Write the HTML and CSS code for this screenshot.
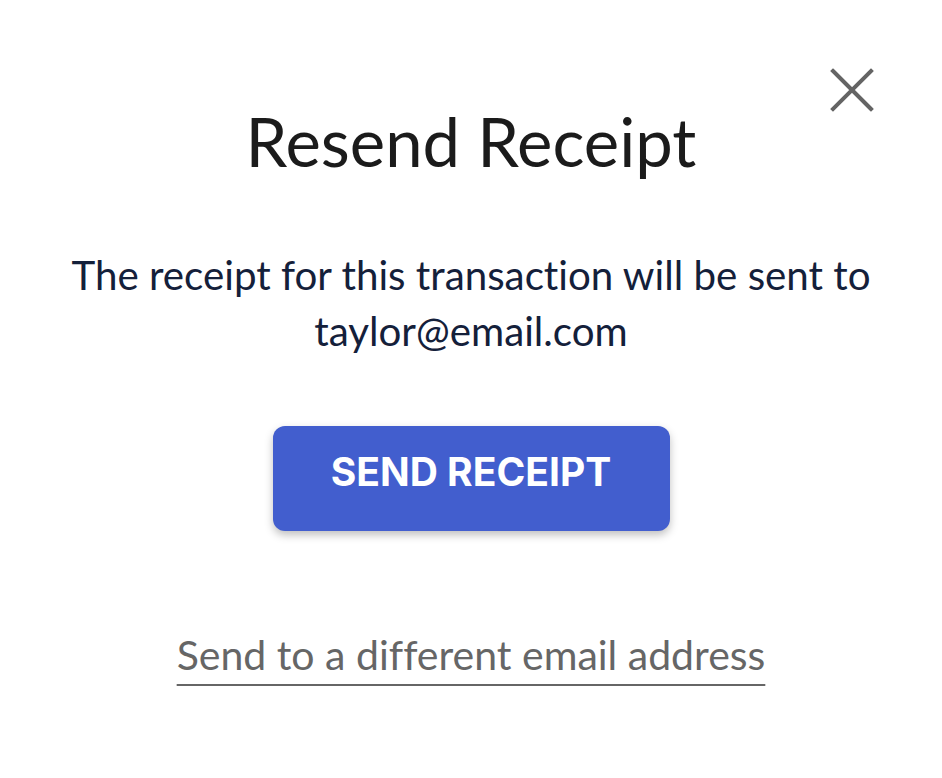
FILE: index.html
```html
<!DOCTYPE html>
<html lang="en">
<head>
<meta charset="utf-8">
<title>Resend Receipt</title>
<link rel="stylesheet" href="styles.css">
</head>
<body>
<div class="modal">
  <button class="close" aria-label="Close">
    <svg viewBox="0 0 44 44" width="44" height="44"><path d="M3 3 L41 41 M41 3 L3 41" stroke="#646464" stroke-width="4" fill="none" stroke-linecap="square"/></svg>
  </button>
  <h1 class="title">Resend Receipt</h1>
  <p class="message">The receipt for this transaction will be sent to<br>taylor@email.com</p>
  <button class="send">SEND RECEIPT</button>
  <a class="alt-link" href="#">Send to a different email address</a>
</div>
</body>
</html>
```

FILE: styles.css
```css
html, body {
  margin: 0;
  padding: 0;
  background: #ffffff;
}
.modal {
  position: relative;
  width: 942px;
  height: 778px;
  display: flex;
  flex-direction: column;
  align-items: center;
  font-family: "Lato", "Noto Sans", sans-serif;
  font-variant-ligatures: none;
  box-sizing: border-box;
  padding-top: 101px;
}
.close {
  position: absolute;
  top: 68px;
  left: 830px;
  width: 44px;
  height: 44px;
  padding: 0;
  border: none;
  background: none;
  cursor: pointer;
}
.close svg { display: block; }
.title {
  margin: 0;
  font-size: 67px;
  font-weight: 400;
  color: #1b1b1b;
  line-height: 80px;
}
.message {
  margin: 66px 0 0;
  font-size: 40.3px;
  line-height: 56px;
  color: #14203a;
  text-align: center;
}
.send {
  margin-top: 67px;
  width: 397px;
  height: 105px;
  padding: 0 0 14px;
  border: none;
  border-radius: 12px;
  background: #425ece;
  color: #ffffff;
  font-family: "Inter", "Roboto", sans-serif;
  font-weight: 700;
  font-size: 39px;
  box-shadow: 0 4px 8px rgba(0,0,0,0.25);
  cursor: pointer;
}
.alt-link {
  margin-top: 99px;
  font-size: 41px;
  line-height: 50px;
  color: #666666;
  text-decoration: underline;
  text-decoration-thickness: 2px;
  text-underline-offset: 14px;
}
```
